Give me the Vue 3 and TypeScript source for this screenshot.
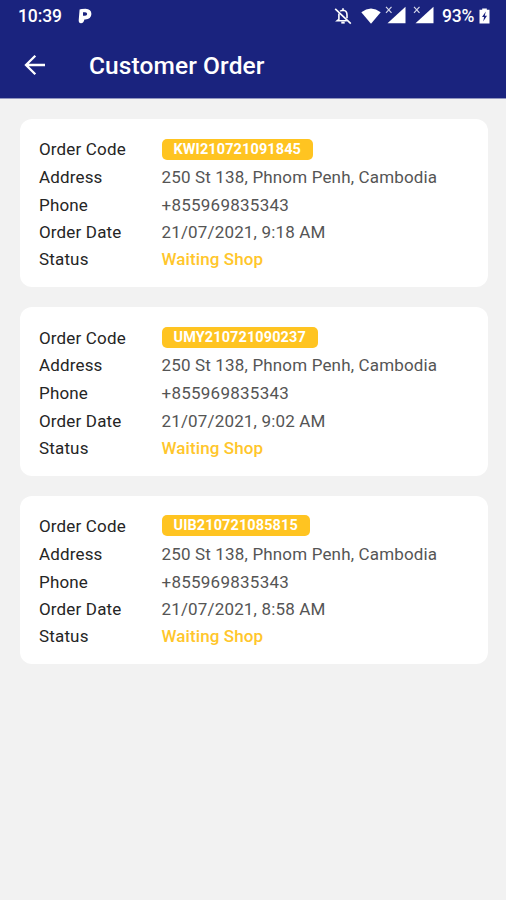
<script setup lang="ts">
interface Order {
  code: string
  address: string
  phone: string
  date: string
  status: string
}

const place = '250 St 138, Phnom Penh, Cambodia'
const phone = '+855969835343'
const orders: Order[] = [
  { code: 'KWI210721091845', address: place, phone, date: '21/07/2021, 9:18 AM', status: 'Waiting Shop' },
  { code: 'UMY210721090237', address: place, phone, date: '21/07/2021, 9:02 AM', status: 'Waiting Shop' },
  { code: 'UIB210721085815', address: place, phone, date: '21/07/2021, 8:58 AM', status: 'Waiting Shop' },
]
</script>

<template>
  <div class="screen">
    <header class="top">
      <div class="statusbar">
        <span class="clock">10:39</span>
        <svg class="pay" width="14" height="16" viewBox="0 0 14 16">
          <path fill-rule="evenodd" d="M1.6 1.5Q3 0.7 7.5 0.7Q13.4 0.9 13.4 6Q13.2 11.3 7.2 11.5L6.4 11.5Q5.8 15.2 3 15.2Q0.6 15.2 0.7 12.2ZM5 4.3V7.8H7.1Q9.1 7.7 9.2 6Q9.1 4.3 7.1 4.3Z" fill="#fff" />
        </svg>
        <div class="tray">
          <svg class="bell" width="18" height="18" viewBox="0 0 18 18" fill="none" stroke="#fff" stroke-width="1.6">
            <path d="M6.2 4.3Q7 3.4 9 3.2Q13 3.5 13 8V11.2M4.9 6.5V12.3L3.2 13.8H12.8M9 1.2V3.2" />
            <path d="M1.2 1.8L16.8 16.7" />
            <path d="M7.3 15.6H10.7" stroke-width="2" />
          </svg>
          <svg class="wifi" width="20" height="16" viewBox="0 0 20 16">
            <path d="M0.3 4.2Q10 -3 19.7 4.2L10 15.8Z" fill="#fff" />
          </svg>
          <svg v-for="n in 2" :key="n" class="signal" width="21" height="18" viewBox="0 0 21 18">
            <path d="M20.5 0.8V17.3H2.5Z" fill="#fff" />
            <path d="M1 0.8L6.5 6.8M6.5 0.8L1 6.8" stroke="#1a237e" stroke-width="2.6" />
            <path d="M1 0.8L6.5 6.8M6.5 0.8L1 6.8" stroke="#d5d7e9" stroke-width="1.2" />
          </svg>
          <span class="percent">93%</span>
          <svg class="battery" width="11" height="16" viewBox="0 0 11 16">
            <path d="M3.2 0.5H7.8V1.8H10.5V15.5H0.5V1.8H3.2Z" fill="#fff" />
            <path d="M6.8 3.6L3 9.1H5.1L4.2 13.4L8 7.7H5.8Z" fill="#1a237e" />
          </svg>
        </div>
      </div>
      <div class="appbar">
        <svg class="back" width="22" height="22" viewBox="0 0 22 22" fill="none" stroke="#fff" stroke-width="2.3">
          <path d="M21 11H2.5M11.3 1.7L2 11L11.3 20.3" />
        </svg>
        <h1 class="title">Customer Order</h1>
      </div>
    </header>
    <main class="list">
      <article v-for="order in orders" :key="order.code" class="card">
        <dl class="fields">
          <dt>Order Code</dt>
          <dd class="code-cell"><span class="code">{{ order.code }}</span></dd>
          <dt>Address</dt>
          <dd>{{ order.address }}</dd>
          <dt>Phone</dt>
          <dd class="phone">{{ order.phone }}</dd>
          <dt>Order Date</dt>
          <dd>{{ order.date }}</dd>
          <dt>Status</dt>
          <dd class="waiting">{{ order.status }}</dd>
        </dl>
      </article>
    </main>
  </div>
</template>

<style>
body {
  background: #f2f2f2;
}
</style>

<style scoped>
.screen {
  min-height: 900px;
  background: #f2f2f2;
  font-family: Roboto, "Liberation Sans", sans-serif;
}
.top {
  height: 98px;
  background: #1a237e;
  color: #fff;
  border-bottom: 1px solid #9296bf;
  box-sizing: content-box;
}
.statusbar {
  display: flex;
  align-items: center;
  height: 32px;
  padding: 0 16px 0 18px;
  font-size: 17.5px;
  font-weight: 500;
}
.clock {
  width: 60px;
  letter-spacing: -0.1px;
}
.tray {
  display: flex;
  align-items: center;
  margin-left: auto;
}
.wifi {
  margin: 0 4px 0 9px;
}
.signal {
  margin-right: 7px;
  margin-top: -2px;
}
.percent {
  width: 37px;
  margin-left: 1px;
  letter-spacing: -0.2px;
}
.battery {
  margin-right: 0;
}
.appbar {
  display: flex;
  align-items: center;
  height: 66px;
  padding-left: 24px;
}
.title {
  margin: 1px 0 0 43px;
  font-size: 24.5px;
  line-height: 28px;
  font-weight: 500;
  letter-spacing: 0.1px;
}
.list {
  display: flex;
  flex-direction: column;
  gap: 20px;
  padding: 20px 18.5px 20px 20px;
}
.card {
  height: 168.4px;
  box-sizing: border-box;
  padding: 17px 19px;
  background: #fff;
  border-radius: 12px;
}
.fields {
  display: grid;
  grid-template-columns: 122.5px 1fr;
  grid-template-rows: 27.4px 28px 28px 27px 27px;
  align-items: center;
  margin: 0;
  font-size: 17px;
  line-height: 21px;
  letter-spacing: 0.16px;
  color: #252525;
}
dd {
  margin: 0;
  color: #555;
  white-space: nowrap;
}
.phone {
  letter-spacing: 0.25px;
}
.code-cell {
  display: flex;
}
.code {
  height: 21px;
  margin-top: -1px;
  padding: 0 12px;
  border-radius: 5px;
  background: #ffc421;
  color: #fff;
  font-size: 14.5px;
  line-height: 21px;
  font-weight: 700;
  letter-spacing: 0.1px;
}
.fields .waiting {
  color: #ffc62b;
  font-weight: 500;
  letter-spacing: 0.1px;
}
</style>
